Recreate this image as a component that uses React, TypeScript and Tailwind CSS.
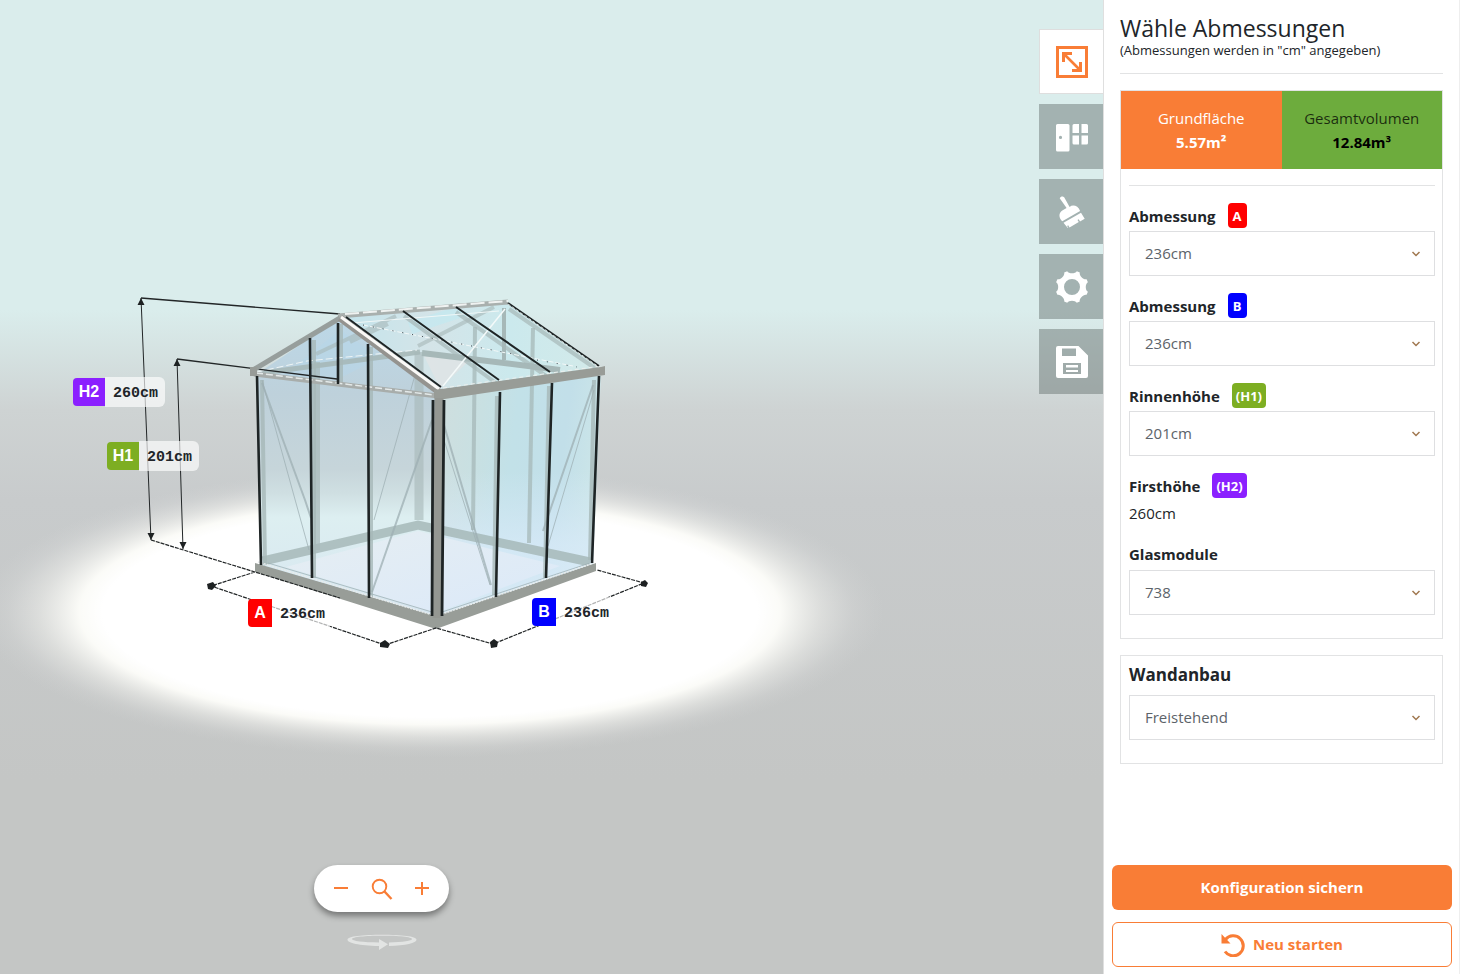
import { useState, type ReactNode } from "react";
import clsx from "clsx";

interface Tab {
    id: string;
    label: string;
    icon: ReactNode;
}

interface SelectBoxProps {
    id: string;
    options: string[];
}

const SizeIcon = () => (
    <svg width="32" height="32" viewBox="0 0 32 32" fill="none" stroke="currentColor">
        <rect x="1.500" y="1.500" width="29" height="29" strokeWidth="3" />
        <path d="M9 9l14 14" strokeWidth="2.600" />
        <path d="M6 6h10v3h-5l-2 2v5H6zM26 26H16v-3h5l2-2v-5h3z" fill="currentColor" stroke="none" />
    </svg>
);

const DoorIcon = () => (
    <svg width="32" height="32" viewBox="0 0 32 32" fill="currentColor">
        <path
            fillRule="evenodd"
            d="M1.500 3H12a1.500 1.500 0 0 1 1.500 1.500V29A1.500 1.500 0 0 1 12 30.500H1.500A1.500 1.500 0 0 1 0 29V4.500A1.500 1.500 0 0 1 1.500 3zM4.500 14.800a1.600 1.600 0 1 0 0 3.200 1.600 1.600 0 0 0 0-3.200z"
        />
        <path d="M18 3h5v9h-6.500V4.500A1.500 1.500 0 0 1 18 3zM25.500 3h5A1.500 1.500 0 0 1 32 4.500V12h-6.500zM16.500 14.500H23v9h-5a1.500 1.500 0 0 1-1.500-1.500zM25.500 14.500H32V22a1.500 1.500 0 0 1-1.500 1.500h-5z" />
    </svg>
);

const BrushIcon = () => (
    <svg width="32" height="32" viewBox="0 0 32 32" fill="currentColor">
        <path d="M3.700 2.300C4.800-.2 7.700 0 8.600 1.900l5 9c3.200-2.700 8.600-1.200 10.500 4.100L6.300 25.200C2.500 22 2.500 16.800 6.300 14.600l4.300-2.500z" />
        <path d="M25 16.700l3.700 6-4.700 2.700-1.300-2.200-1.200.7 1.300 2.200-9.300 5.400-1.300-2.200-1.100.7 1.300 2.200L11.800 32l-4.300-5.200z" />
    </svg>
);

const GearIcon = () => (
    <svg width="32" height="32" viewBox="0 0 32 32" fill="currentColor">
        <path
            fillRule="evenodd"
            d="M11.200.2c1.500 2.700 8.100 2.700 9.600 0l3 1.200c-.9 3 3.800 7.700 6.800 6.800l1.300 3c-2.800 1.500-2.800 8.100 0 9.600l-1.300 3c-3-.9-7.700 3.800-6.800 6.800l-3 1.200c-1.500-2.700-8.100-2.700-9.600 0l-3-1.200c.9-3-3.800-7.700-6.800-6.800l-1.300-3c2.800-1.500 2.800-8.100 0-9.600l1.300-3c3 .9 7.700-3.800 6.800-6.800zM16 8a8 8 0 1 0 0 16 8 8 0 0 0 0-16z"
        />
    </svg>
);

const SaveIcon = () => (
    <svg width="32" height="32" viewBox="0 0 32 32" fill="currentColor">
        <path
            fillRule="evenodd"
            d="M2 0h20.500L32 9.500V30a2 2 0 0 1-2 2H2a2 2 0 0 1-2-2V2a2 2 0 0 1 2-2zM6 2.500V10h14V2.500zM7 17v11h18V17zM10 19h12v2.500H10zM10 24h12v2H10z"
        />
    </svg>
);

const tabs: Tab[] = [
    { id: "size", label: "Abmessungen", icon: <SizeIcon /> },
    { id: "doors", label: "Türen und Fenster", icon: <DoorIcon /> },
    { id: "colors", label: "Farben", icon: <BrushIcon /> },
    { id: "settings", label: "Einstellungen", icon: <GearIcon /> },
    { id: "save", label: "Speichern", icon: <SaveIcon /> },
];

function Greenhouse() {
    return (
        <svg className="absolute left-0 top-0" width="1104" height="974" viewBox="0 0 1104 974" fill="none" aria-hidden="true">
            <defs>
                <radialGradient id="spot" cx="50%" cy="50%" r="50%">
                    <stop offset="0.72" stopColor="#fff" />
                    <stop offset="0.77" stopColor="#fffffb" stopOpacity="0.93" />
                    <stop offset="0.86" stopColor="#f6f6f2" stopOpacity="0.45" />
                    <stop offset="0.93" stopColor="#eeeeec" stopOpacity="0.15" />
                    <stop offset="1" stopColor="#dcdcdc" stopOpacity="0" />
                </radialGradient>
                <linearGradient id="glassLeft" x1="0" y1="0" x2="0" y2="1">
                    <stop offset="0" stopColor="#bcd8e8" />
                    <stop offset="0.25" stopColor="#bed1db" />
                    <stop offset="0.5" stopColor="#c6d5da" />
                    <stop offset="0.58" stopColor="#cfdfe2" />
                    <stop offset="0.66" stopColor="#ddeff1" />
                    <stop offset="1" stopColor="#d6e5f0" />
                </linearGradient>
                <linearGradient id="glassRight" x1="0" y1="0" x2="1" y2="0.200">
                    <stop offset="0" stopColor="#d0dede" />
                    <stop offset="0.3" stopColor="#c8e0e2" />
                    <stop offset="0.5" stopColor="#c2e1e8" />
                    <stop offset="0.8" stopColor="#c2dfe9" />
                    <stop offset="1" stopColor="#cbe5e8" />
                </linearGradient>
                <linearGradient id="glassRightGlow" x1="0" y1="0" x2="0" y2="1">
                    <stop offset="0.4" stopColor="#daebfa" stopOpacity="0" />
                    <stop offset="0.7" stopColor="#daebfa" stopOpacity="0.7" />
                    <stop offset="1" stopColor="#dbebf8" stopOpacity="0.8" />
                </linearGradient>
                <linearGradient id="roof" x1="0" y1="0" x2="1" y2="0">
                    <stop offset="0" stopColor="#c3e4ec" />
                    <stop offset="0.35" stopColor="#d4e4e8" />
                    <stop offset="0.65" stopColor="#cbe9ed" />
                    <stop offset="1" stopColor="#d3eae9" />
                </linearGradient>
                <linearGradient id="floor" x1="0" y1="0" x2="1" y2="1">
                    <stop offset="0" stopColor="#e6eef2" />
                    <stop offset="1" stopColor="#dbe9f9" />
                </linearGradient>
            </defs>

            <ellipse cx="430" cy="612" rx="455" ry="146" fill="url(#spot)" />

            {/* glass */}
            <path d="M257 374L340 318l98 76-2 226-175-54z" fill="url(#glassLeft)" />
            <path d="M438 396l163-24-8 194-157 54z" fill="url(#glassRight)" />
            <path d="M438 396l163-24-8 194-157 54z" fill="url(#glassRightGlow)" />
            <path d="M340 316l168-13 93 66-163 24z" fill="url(#roof)" />
            <path d="M340 330l40 28-40 20h-60z" fill="#b5d6ea" fillOpacity="0.4" />
            <path d="M424 356l16 32 30-28z" fill="#e0e4e5" fillOpacity="0.8" />
            <path d="M408 322l44-14 20 6-60 20z" fill="#c0e9f2" fillOpacity="0.6" />
            <path d="M286 567l132-36 142 35-124 47z" fill="url(#floor)" />

            {/* back frame seen through the glass */}
            <g stroke="#a6b8b8">
                <path d="M263 561l155-36 172 37" strokeWidth="9" strokeOpacity="0.85" />
                <path d="M419 352v168" strokeWidth="9" strokeOpacity="0.6" />
                <path d="M475 327l-2 203M533 328l-4 215" strokeWidth="4" strokeOpacity="0.75" />
                <path d="M504 308v52" strokeWidth="4" />
                <path d="M422 353l138 17" strokeWidth="6" />
                <path d="M262 373l158-21" strokeWidth="5" strokeOpacity="0.9" />
                <path d="M316 354l80-38M418 346l76-39M350 342l38-18" strokeWidth="4" strokeOpacity="0.6" />
                <path d="M509 309l90 62M404 316l92 67M456 312l90 64" strokeWidth="4" strokeOpacity="0.7" />
                <path d="M317 362v188" strokeWidth="6" strokeOpacity="0.7" />
                <path d="M314 340v238M341 324v60M371 347v250M497 396l-3 199M549 386l-4 192M594 380l-4 180M262 380l3 184" strokeWidth="4" strokeOpacity="0.8" />
            </g>
            <g stroke="#9eafb3" strokeOpacity="0.75">
                <path d="M262 380l47 170M415 375l-41 145M444 440l46 145M594 390l-46 156" strokeWidth="1" />
                <path d="M262 383l43 117 6 18M432 420l-60 172M444 425l47 160M593 385l-50 146" strokeWidth="2" />
                <path d="M268 563l164 49M442 612l148-49" strokeWidth="1" />
            </g>

            {/* roof highlights */}
            <path d="M443 386l62-77" stroke="#f4fafa" strokeWidth="1.500" />
            <path d="M363 325l210 41" stroke="#f2f8f8" strokeWidth="1" strokeDasharray="5 2" />
            <path d="M363 325l150 29M537 360l40 7" stroke="#39434a" strokeWidth="1" strokeDasharray="1 9" />
            <path d="M352 323l147-12" stroke="#f0f7f7" strokeWidth="1" />
            <path d="M257 372l50-11 110-11" stroke="#edf4f5" strokeWidth="1" strokeDasharray="7 3" />

            {/* base */}
            <path d="M255 563l181 53 160-53v8l-160 58-181-57z" fill="#989d98" />
            <path d="M258 562l178 54 158-53" stroke="#e8ecec" strokeWidth="1.500" strokeDasharray="2 1" />

            {/* dimension lines */}
            <g stroke="#222627" strokeWidth="1">
                <path d="M141 298l199 16M177 359l160 20" strokeWidth="1.300" />
                <path d="M141 298l10 242M177 359l6 190" />
                <path d="M151 540l104 32 85 26M255 572l-44 14 174 59 51-17 57 16 151-61-47-13" strokeDasharray="4 1" strokeWidth="1.200" />
            </g>
            <g fill="#1d2122">
                <path d="M141 298l3.500 7h-7zM177 359l3.500 7h-7zM151 540l-3.500-7h7zM183 549l-3.500-7h7z" />
                <path d="M207 584l6-2 3 4-4 4-4-1zM380 643l5-3 5 4-2 4-8-1zM490 642l4-3 4 3-1 5-6 1zM641 582l4-2 3 3-2 4-5-1z" />
            </g>

            {/* ridge, gutters and gable */}
            <path d="M338 316l170-14" stroke="#a9b0ae" strokeWidth="5" />
            <path d="M345 314l163-13" stroke="#eff2f1" strokeWidth="2" strokeDasharray="14 4" />
            <path d="M253 370l87-52" stroke="#979e9c" strokeWidth="5" />
            <path d="M340 318l99 74" stroke="#94938f" strokeWidth="7" />
            <path d="M341 317l98 72" stroke="#faf9f7" strokeWidth="3" />
            <path d="M254 374l184 22" stroke="#a8adab" strokeWidth="5" />
            <path d="M256 373l178 22" stroke="#e3e9e9" strokeWidth="1.500" strokeDasharray="7 3" />
            <path d="M434 390l167-23 4-1v9l-167 25-4-2z" fill="#989c97" />
            <path d="M443 388l158-22" stroke="#edf0ee" strokeWidth="1" strokeDasharray="4 3" />
            <path d="M250 367h7v9h-7z" fill="#989c98" />

            {/* posts */}
            <path d="M257 376l4 189M310 338l2 240M338 323v61M368 344l1 254M500 392l-4 205M552 383l-6 195M599 376l-7 187" stroke="#1e2425" strokeWidth="2.600" />
            <path d="M346 317l95 70M403 311l96 69M456 307l94 65M508 303l91 63" stroke="#1e2425" strokeWidth="2" />
            <path d="M508 304l91 63" stroke="#d7dddb" strokeWidth="1" strokeDasharray="3 2" />
            <path d="M439 398l-2 220" stroke="#949792" strokeWidth="9" />
            <path d="M433 400l-1 216M444 400l-2 216" stroke="#1e2425" strokeWidth="2.800" />
        </svg>
    );
}

interface DimensionTagProps {
    name: string;
    value: string;
    className: string;
    colorClass: string;
}

function DimensionTag({ name, value, className, colorClass }: DimensionTagProps) {
    return (
        <div className={clsx("absolute flex items-center", className)}>
            <span className={clsx("flex h-7 items-center justify-center rounded-l font-['Liberation_Sans',sans-serif] text-base font-bold text-white", colorClass)}>
                {name}
            </span>
            <span className="flex h-[30px] items-center rounded-r-md bg-white/65 pl-2 pr-[7px] pt-0.5 font-['Liberation_Mono',monospace] text-[15px] leading-none font-bold text-[#212529]">
                {value}
            </span>
        </div>
    );
}

function SelectBox({ id, options }: SelectBoxProps) {
    return (
        <div className="relative">
            <select
                id={id}
                className="block h-[45px] w-full appearance-none border border-[#dedfe1] bg-white pl-[15px] pr-10 text-[15px] text-[#5c6369]"
            >
                {options.map((option) => (
                    <option key={option}>{option}</option>
                ))}
            </select>
            <svg className="pointer-events-none absolute right-[14px] top-[19px]" width="10" height="8" viewBox="0 0 10 8" fill="none" stroke="#a07850" strokeWidth="1.500">
                <path d="M1.500 2L5 5.500 8.500 2" />
            </svg>
        </div>
    );
}

interface BadgeLabelProps {
    htmlFor?: string;
    text: string;
    badge: string;
    colorClass: string;
}

function BadgeLabel({ htmlFor, text, badge, colorClass }: BadgeLabelProps) {
    return (
        <label htmlFor={htmlFor} className="mb-[3px] flex h-[25px] items-center gap-3 text-[15px] leading-6 font-bold">
            {text}
            <span className={clsx("flex h-[25px] min-w-[19px] items-center justify-center rounded px-1 text-[13px] text-white", colorClass)}>
                {badge}
            </span>
        </label>
    );
}

export default function App() {
    const [activeTab, setActiveTab] = useState("size");

    return (
        <div className="flex min-h-screen bg-white font-['Open_Sans',sans-serif] text-[#212529]">
            {/* 3D view */}
            <main className="relative min-w-0 flex-1 overflow-hidden bg-[linear-gradient(#daedec_0,#daedec_310px,#ced3d3_410px,#c8cbcc_500px,#c4c6c5_780px)]">
                <Greenhouse />

                <DimensionTag name="H2" value="260cm" className="left-[73px] top-[377px]" colorClass="w-8 bg-[#8b20ff]" />
                <DimensionTag name="H1" value="201cm" className="left-[107px] top-[441px]" colorClass="w-8 bg-[#7dae22]" />
                <DimensionTag name="A" value="236cm" className="left-[248px] top-[598px]" colorClass="w-6 bg-[#ff0000]" />
                <DimensionTag name="B" value="236cm" className="left-[532px] top-[597px]" colorClass="w-6 bg-[#0000ff]" />

                <nav className="absolute right-0 top-[29px] flex flex-col gap-2.5">
                    {tabs.map((tab) => (
                        <button
                            key={tab.id}
                            type="button"
                            aria-label={tab.label}
                            onClick={() => setActiveTab(tab.id)}
                            className={clsx(
                                "flex h-[65px] w-16 items-center border-l pl-4",
                                activeTab === tab.id
                                    ? "border-y border-[#dedede] bg-white text-[#f97d36]"
                                    : "border-transparent bg-[#6b7776]/50 text-white"
                            )}
                        >
                            {tab.icon}
                        </button>
                    ))}
                </nav>

                <div className="absolute bottom-6 left-[314px] flex flex-col items-center gap-[22px]">
                    <div className="flex h-[47px] w-[135px] items-center justify-between rounded-full bg-white px-5 text-[#f97d36] shadow-[0_4px_6px_rgba(0,0,0,0.4)]">
                        <button type="button" aria-label="Verkleinern">
                            <svg width="14" height="14" viewBox="0 0 14 14" stroke="currentColor" strokeWidth="2">
                                <path d="M0 6h14" />
                            </svg>
                        </button>
                        <button type="button" aria-label="Ansicht zurücksetzen">
                            <svg width="22" height="22" viewBox="0 0 22 22" fill="none" stroke="currentColor">
                                <circle cx="8.500" cy="8.500" r="6.800" strokeWidth="1.900" />
                                <path d="M13.500 13.500l7 7.500" strokeWidth="2.400" />
                            </svg>
                        </button>
                        <button type="button" aria-label="Vergrößern">
                            <svg width="14" height="14" viewBox="0 0 14 14" stroke="currentColor" strokeWidth="2">
                                <path d="M0 6h14M7 0v13" />
                            </svg>
                        </button>
                    </div>
                    {/* rotate hint */}
                    <svg width="70" height="16" viewBox="0 0 70 16" fill="#e2e4e3">
                        <path
                            fillRule="evenodd"
                            d="M42 8.500c14-.3 23-1.500 23-3.400C65 3 52 1.800 35 1.800S5 3 5 5.100c0 2 11 3.300 27 3.500V5l9 5.300-9 5.700v-4C12 11.400.500 9 .500 5.700.500 2.300 16 .8 35 .8s34.500 1.500 34.500 4.900c0 3.300-11 5.800-27.500 6.200z"
                        />
                    </svg>
                </div>
            </main>

            {/* Configuration panel */}
            <aside className="flex w-[357px] shrink-0 flex-col border-l border-r border-l-[#dfdfdf] border-r-[#eeeeee]">
                <div className="px-4 pt-[15px]">
                    <header className="border-b border-[#e2e3e4] pb-[13px]">
                        <h1 className="text-[23px] leading-[26px] font-medium">Wähle Abmessungen</h1>
                        <p className="text-[13px] leading-[19px]">(Abmessungen werden in &quot;cm&quot; angegeben)</p>
                    </header>

                    <section className="mt-4 border border-[#e2e3e4] pb-[23px]">
                        <div className="grid h-[78px] grid-cols-2 text-center text-[15px] leading-6">
                            <div className="flex flex-col justify-center bg-[#f97d36] text-white">
                                <span>Grundfläche</span>
                                <strong>5.57m²</strong>
                            </div>
                            <div className="flex flex-col justify-center bg-[#6dac3d] text-black">
                                <span className="text-black/75">Gesamtvolumen</span>
                                <strong>12.84m³</strong>
                            </div>
                        </div>

                        <div className="pl-2 pr-[7px]">
                            <hr className="mb-[17px] mt-4 border-[#e2e3e4]" />
                            <div className="flex flex-col gap-[17px]">
                                <div>
                                    <BadgeLabel htmlFor="dimA" text="Abmessung" badge="A" colorClass="bg-[#ff0000]" />
                                    <SelectBox id="dimA" options={["236cm", "310cm", "384cm"]} />
                                </div>
                                <div>
                                    <BadgeLabel htmlFor="dimB" text="Abmessung" badge="B" colorClass="bg-[#0000ff]" />
                                    <SelectBox id="dimB" options={["236cm", "310cm", "384cm"]} />
                                </div>
                                <div>
                                    <BadgeLabel htmlFor="dimH1" text="Rinnenhöhe" badge="(H1)" colorClass="bg-[#7dae22]" />
                                    <SelectBox id="dimH1" options={["201cm", "221cm"]} />
                                </div>
                                <div>
                                    <BadgeLabel htmlFor="dimH2" text="Firsthöhe" badge="(H2)" colorClass="bg-[#8b20ff]" />
                                    <output id="dimH2" className="block text-[15px] leading-6">260cm</output>
                                </div>
                                <div>
                                    <label htmlFor="modules" className="mb-1 block text-[15px] leading-6 font-bold">Glasmodule</label>
                                    <SelectBox id="modules" options={["738", "980"]} />
                                </div>
                            </div>
                        </div>
                    </section>

                    <section className="mt-4 border border-[#e2e3e4] pb-[23px] pl-2 pr-[7px] pt-[7px]">
                        <label htmlFor="wall" className="mb-2 block text-[17px] leading-6 font-bold">Wandanbau</label>
                        <SelectBox id="wall" options={["Freistehend", "Wandanbau"]} />
                    </section>
                </div>

                <div className="mt-auto flex flex-col gap-3 pb-[7px] pl-2 pr-[7px] pt-6 text-[15px] font-bold">
                    <button type="button" className="h-[45px] rounded-md bg-[#f97d36] text-white">
                        Konfiguration sichern
                    </button>
                    <button type="button" className="flex h-[45px] items-center justify-center gap-2 rounded-md border border-[#f97d36] bg-white text-[#f97d36]">
                        <svg width="24" height="24" viewBox="0 0 24 24" fill="none" stroke="currentColor">
                            <path d="M4.500 6.500A10 10 0 1 1 4 18.500" strokeWidth="3" />
                            <path d="M.5 1v9.500h9z" fill="currentColor" stroke="none" />
                        </svg>
                        Neu starten
                    </button>
                </div>
            </aside>
        </div>
    );
}
